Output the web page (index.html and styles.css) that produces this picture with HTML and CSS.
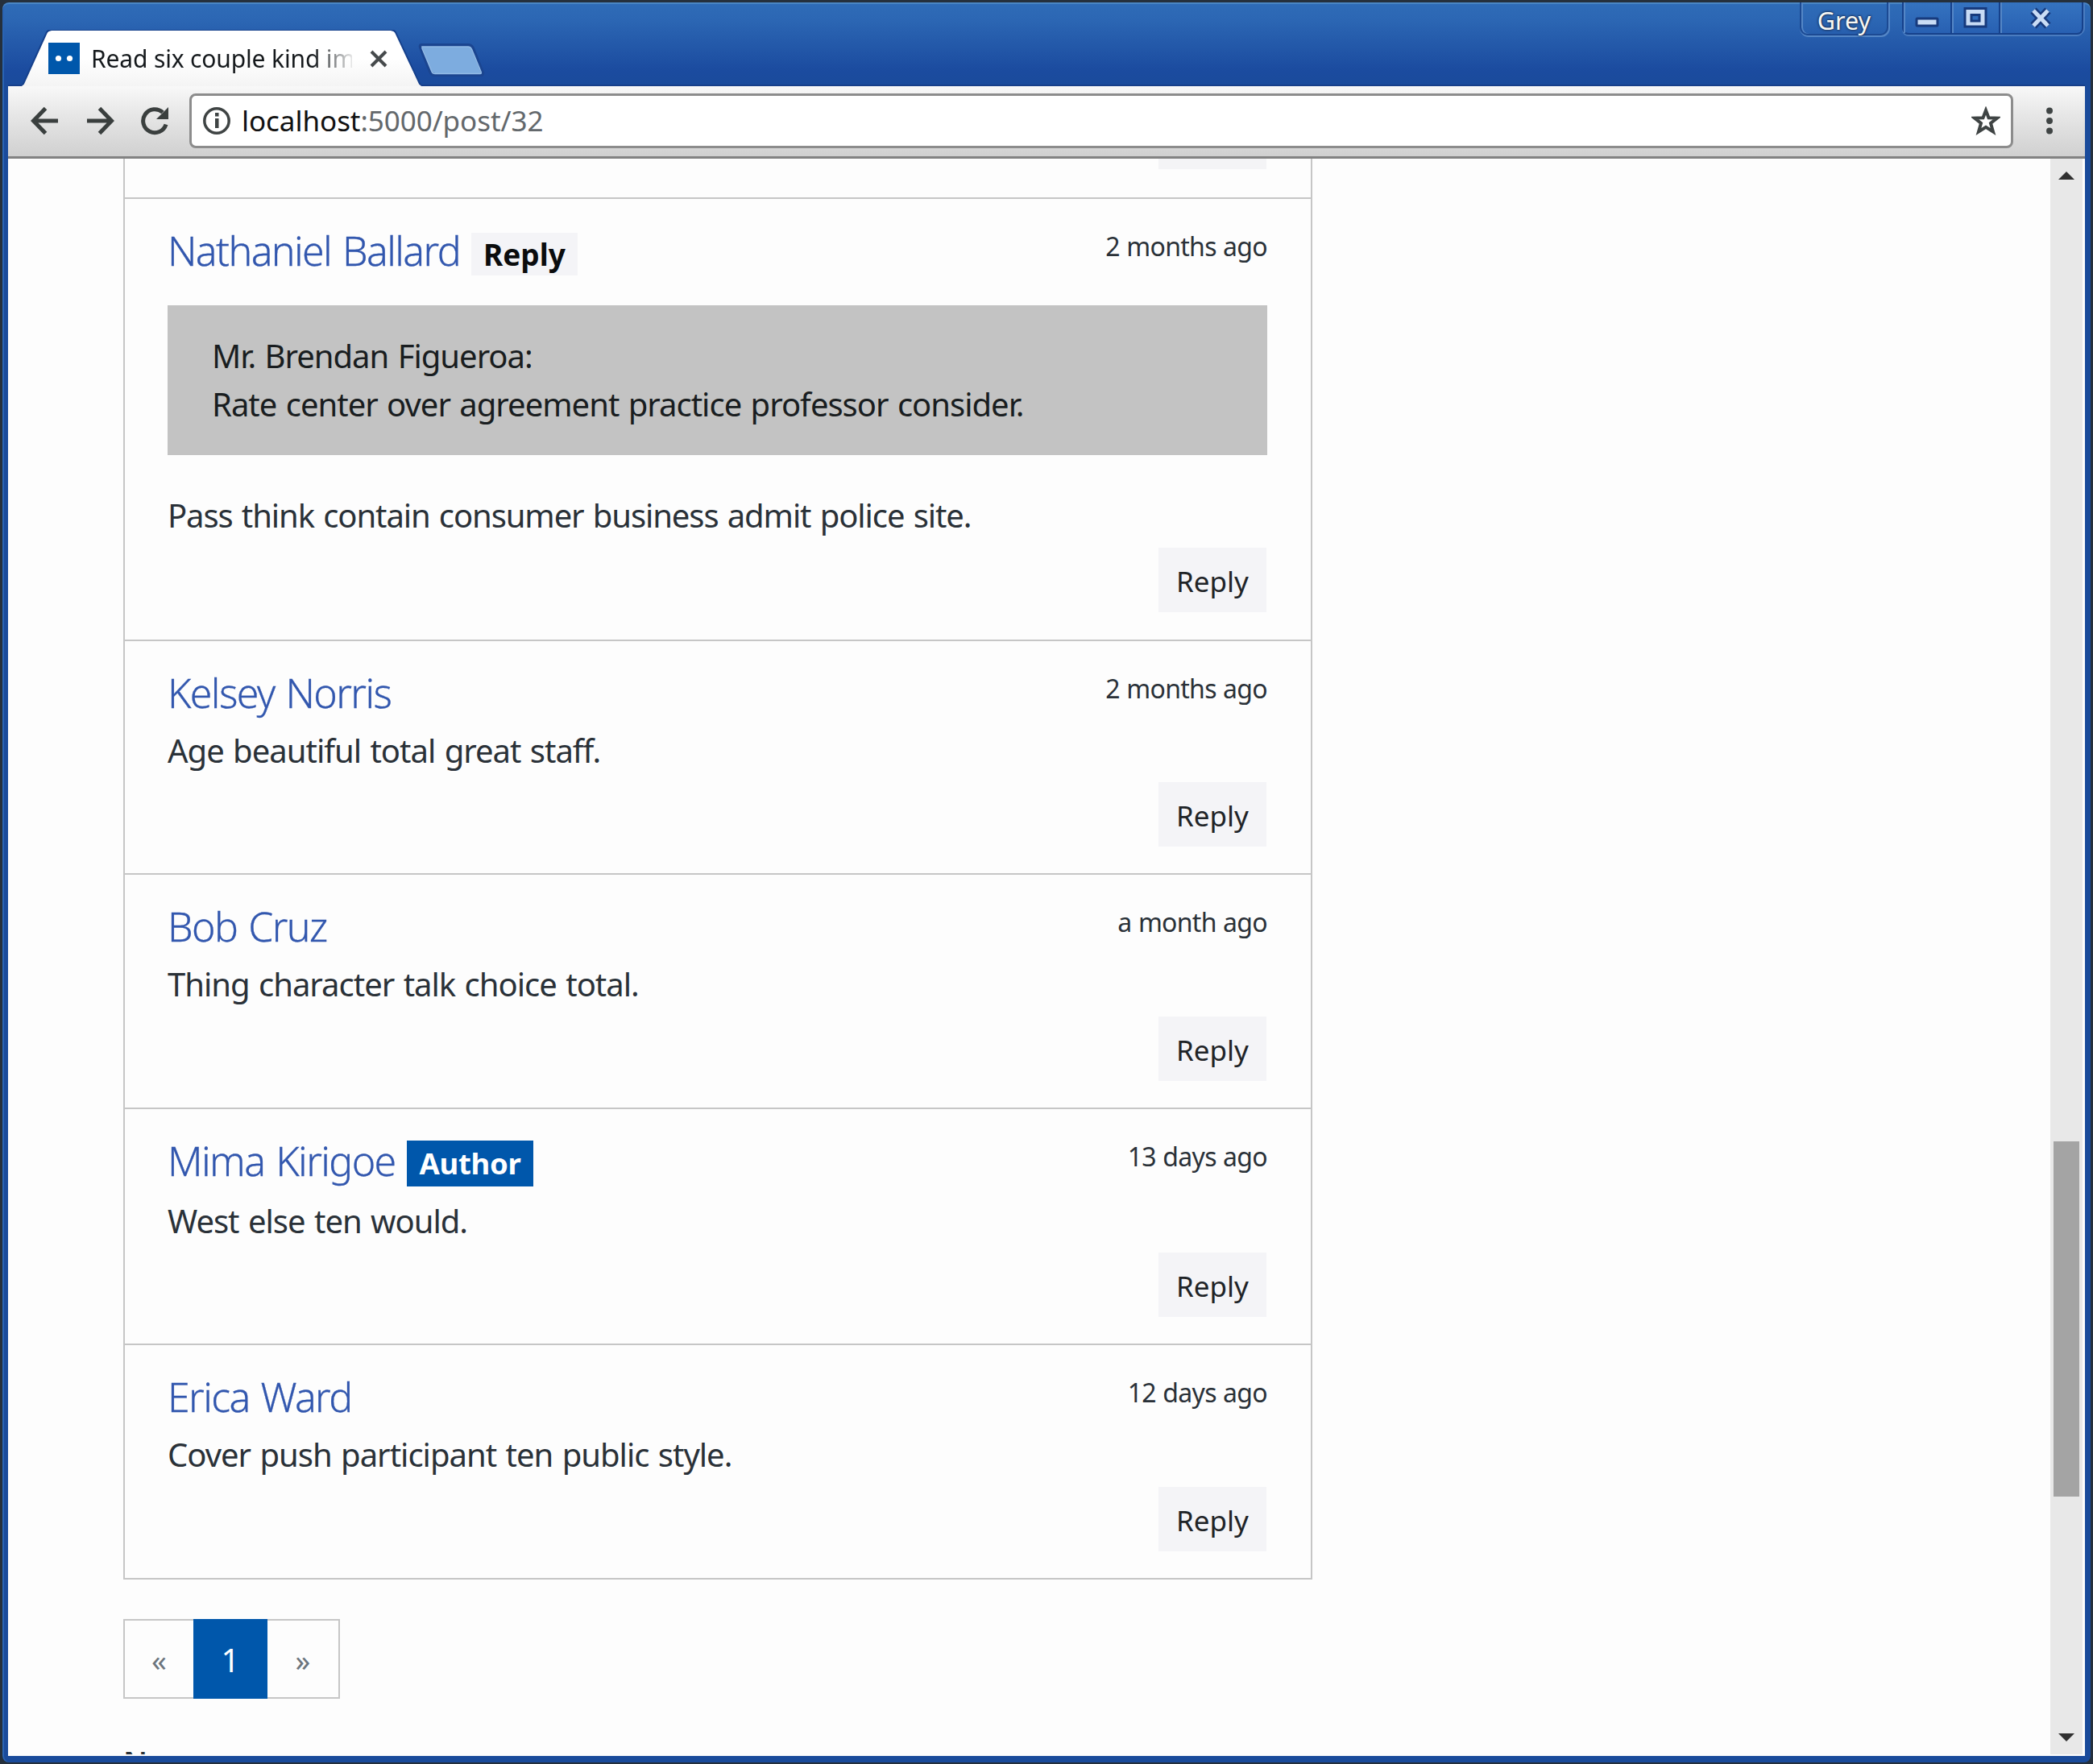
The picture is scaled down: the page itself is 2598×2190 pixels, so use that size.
FILE: index.html
```html
<!DOCTYPE html>
<html lang="en">
<head>
<meta charset="utf-8">
<title>Read six couple kind</title>
<link rel="stylesheet" href="styles.css">
</head>
<body>
<div class="window">
  <header class="titlebar">
    <div class="tab">
      <svg class="tab-shape" width="496" height="70" viewBox="0 0 496 70">
        <defs><linearGradient id="tabfill" x1="0" y1="0" x2="0" y2="1"><stop offset="0.5" stop-color="#fff"/><stop offset="1" stop-color="#f4f4f4"/></linearGradient></defs>
        <path d="M0 70 L2 68 L31 4 Q33 1 37 1 H458 Q462 1 464 4 L494 68 L496 70 Z" fill="url(#tabfill)"/>
        <path d="M0 68 L2 67 L31 3 Q33 0 37 0 H458 Q462 0 464 3 L494 67 L496 68" fill="none" stroke="#16418c" stroke-width="2"/>
      </svg>
      <div class="tab-content">
        <svg class="favicon" width="39" height="39" viewBox="0 0 39 39"><rect width="39" height="39" fill="#0057ab"/><circle cx="12.500" cy="19.500" r="3.600" fill="#fff"/><circle cx="26.500" cy="19.500" r="3.600" fill="#fff"/></svg>
        <span class="tab-title">Read six couple kind im</span>
        <svg class="tab-close" width="22" height="22" viewBox="0 0 22 22"><path d="M2 2 L20 20 M20 2 L2 20" stroke="#464a4c" stroke-width="4" fill="none"/></svg>
      </div>
    </div>
    <svg class="new-tab" width="84" height="44" viewBox="0 0 84 44"><path d="M5 3 H63 Q67 3 69 7 L81 37 Q82 40 79 40 H22 Q18 40 16 36 L4 6 Q3 3 5 3 Z" fill="#7dacdf" stroke="#1b4590" stroke-width="4"/><path d="M6 5 H63 Q66 5 67.500 8 L79 36 Q80 38.500 78 38.500 H22 Q19 38.500 18 36 L6 7 Z" fill="none" stroke="#93bbe6" stroke-width="1.500"/></svg>
    <div class="user-button">Grey</div>
    <div class="window-buttons">
      <div class="win-btn"><svg width="32" height="30" viewBox="0 0 32 30"><rect x="3" y="16" width="26" height="9" rx="1" fill="#c9dcf5" stroke="#173a7d" stroke-width="3"/></svg></div>
      <div class="win-btn"><svg width="32" height="30" viewBox="0 0 32 30"><path fill-rule="evenodd" d="M3 3.500 H29 V26 H3 Z M11 11.500 V19 H21 V11.500 Z" fill="#c9dcf5" stroke="#173a7d" stroke-width="3"/></svg></div>
      <div class="win-btn win-close"><svg width="32" height="30" viewBox="0 0 32 30"><path d="M6 6 L24 25 M24 6 L6 25" stroke="#173a7d" stroke-width="10"/><path d="M6 6 L24 25 M24 6 L6 25" stroke="#c9dcf5" stroke-width="5"/></svg></div>
    </div>
  </header>
  <nav class="toolbar">
    <svg class="tool" width="36" height="36" viewBox="0 0 36 36"><path d="M34 18 H4 M18.500 2.500 L3.500 18 L18.500 33.500" fill="none" stroke="#3a3f3e" stroke-width="5"/></svg>
    <svg class="tool" width="36" height="36" viewBox="0 0 36 36"><path d="M2 18 H32 M17.500 2.500 L32.500 18 L17.500 33.500" fill="none" stroke="#3a3f3e" stroke-width="5"/></svg>
    <svg class="tool" width="36" height="36" viewBox="0 0 36 36"><path d="M32 22.500 A14.500 14.500 0 1 1 28 7.500" fill="none" stroke="#3a3f3e" stroke-width="5"/><path d="M35 1 V16 H20 Z" fill="#3a3f3e"/></svg>
    <div class="omnibox">
      <svg width="36" height="36" viewBox="0 0 36 36"><circle cx="18" cy="18" r="15.200" fill="none" stroke="#3f4444" stroke-width="3.500"/><rect x="16" y="15" width="4.500" height="12" fill="#3f4444"/><rect x="16" y="8" width="4.500" height="4.500" fill="#3f4444"/></svg>
      <span class="url"><span class="host">localhost</span>:5000/post/32</span>
      <svg class="star" width="36" height="36" viewBox="0 0 36 36"><path d="M18 5 L21.500 14.300 L32 14.600 L24 21 L27 31.500 L18 25.800 L9 31.500 L12 21 L4 14.600 L14.500 14.300 Z" fill="none" stroke="#3f4444" stroke-width="4"/></svg>
    </div>
    <svg class="menu" width="10" height="36" viewBox="0 0 10 36"><circle cx="5" cy="5.500" r="4" fill="#3f4444"/><circle cx="5" cy="18" r="4" fill="#3f4444"/><circle cx="5" cy="30.500" r="4" fill="#3f4444"/></svg>
  </nav>
  <div class="viewport">
    <main class="page">
      <section class="comments">
        <article class="comment comment-cut"><div class="reply-cut"></div></article>
        <article class="comment comment-quoted">
          <div class="head"><a class="name">Nathaniel Ballard</a><span class="badge badge-reply">Reply</span><time class="time">2 months ago</time></div>
          <blockquote class="quote">Mr. Brendan Figueroa:<br>Rate center over agreement practice professor consider.</blockquote>
          <p class="text">Pass think contain consumer business admit police site.</p>
          <a class="reply">Reply</a>
        </article>
        <article class="comment">
          <div class="head"><a class="name">Kelsey Norris</a><time class="time">2 months ago</time></div>
          <p class="text">Age beautiful total great staff.</p>
          <a class="reply">Reply</a>
        </article>
        <article class="comment">
          <div class="head"><a class="name">Bob Cruz</a><time class="time">a month ago</time></div>
          <p class="text">Thing character talk choice total.</p>
          <a class="reply">Reply</a>
        </article>
        <article class="comment">
          <div class="head"><a class="name">Mima Kirigoe</a><span class="badge badge-author">Author</span><time class="time">13 days ago</time></div>
          <p class="text">West else ten would.</p>
          <a class="reply">Reply</a>
        </article>
        <article class="comment">
          <div class="head"><a class="name">Erica Ward</a><time class="time">12 days ago</time></div>
          <p class="text">Cover push participant ten public style.</p>
          <a class="reply">Reply</a>
        </article>
      </section>
      <nav class="pagination"><span class="page-item prev">«</span><span class="page-item active">1</span><span class="page-item">»</span></nav>
      <p class="footer-line">N</p>
    </main>
    <div class="scrollbar">
      <svg width="20" height="10" viewBox="0 0 20 10"><path d="M0 10 L10 0 L20 10 Z" fill="#303030"/></svg>
      <div class="thumb"></div>
      <svg width="20" height="10" viewBox="0 0 20 10"><path d="M0 0 H20 L10 10 Z" fill="#303030"/></svg>
    </div>
  </div>
</div>
</body>
</html>
```
FILE: styles.css
```css
* { box-sizing: border-box; }

body {
  margin: 0;
  background: #25303c;
  font-family: "Noto Sans", "Open Sans", sans-serif;
  color: #2a3138;
}

p, blockquote { margin: 0; }
svg { display: block; flex: none; }

.window {
  width: 2592px;
  height: 2185px;
  margin: 3px;
  padding: 0 7px 5px 7px;
  border-radius: 8px;
  background: #1a4b9b;
  box-shadow: inset 0 2px 0 #4a86c4, inset 2px 0 0 #2a64b4;
  background-image: linear-gradient(#2f6cb7 0, #2c67b4 20px, #1b4b9f 85px, #1a4b9b 100%);
  background-repeat: no-repeat;
  background-size: 100% 104px;
  overflow: hidden;
}

/* title bar */
.titlebar {
  display: flex;
  align-items: flex-start;
  height: 104px;
  border-bottom: 2px solid #173f8a;
}

.tab {
  display: grid;
  width: 496px;
  margin: 34px 0 0 17px;
}

.tab-shape, .tab-content { grid-area: 1 / 1; }

.tab-content {
  display: flex;
  align-items: flex-start;
  padding: 16px 0 0 33px;
}

.tab-title {
  width: 324px;
  margin-left: 14px;
  overflow: hidden;
  white-space: nowrap;
  font-size: 30px;
  line-height: 39px;
  letter-spacing: -0.15px;
  background: linear-gradient(to right, #15191c 275px, #ffffff 330px);
  background-clip: text;
  -webkit-background-clip: text;
  color: transparent;
}

.tab-close { margin: 9px 0 0 22px; }
.new-tab { margin: 50px 0 0 -5px; }

.user-button {
  width: 110px;
  height: 41px;
  margin-left: auto;
  border: 2px solid #1c4a93;
  border-top: 0;
  border-radius: 0 0 10px 10px;
  box-shadow: 1px 1px 0 1px #5486c6, inset 2px 0 0 #5486c6;
  color: #f8f8f4;
  font-size: 30.5px;
  line-height: 44px;
  text-align: center;
  text-shadow: 0 0 3px #1d2d4d, 0 0 3px #1d2d4d;
}

.window-buttons {
  display: flex;
  height: 40px;
  margin: 0 2px 0 17px;
  border: 2px solid #16418b;
  border-top: 0;
  border-radius: 0 0 8px 8px;
  box-shadow: 0 2px 0 #4a7cc0, 2px 0 0 #4a7cc0;
  background: linear-gradient(#3573c0, #2860b2);
}

.win-btn {
  display: flex;
  justify-content: center;
  width: 60px;
  padding-top: 4px;
  border-right: 2px solid #16418b;
  box-shadow: inset 2px 0 0 #5486c6;
}

.win-close { width: 101px; border-right: 0; }

/* toolbar */
.toolbar {
  display: flex;
  align-items: center;
  height: 90px;
  padding: 0 39px 2px 28px;
  border-bottom: 3px solid #828282;
  background: linear-gradient(#f8f8f8, #e9e9e9 35%, #d0d0d0);
}

.tool { margin-right: 32px; }

.omnibox {
  display: flex;
  align-items: center;
  flex: 1;
  height: 68px;
  margin-left: -7px;
  margin-right: 40px;
  padding: 0 13px;
  border: 3px solid #8c8c8c;
  border-radius: 8px;
  background: #fff;
}

.url {
  margin-left: 13px;
  color: #63686c;
  font-size: 35px;
  letter-spacing: -0.05px;
  line-height: 56px;
}

.host { color: #111; }
.star { margin-left: auto; }

/* page */
.viewport {
  display: flex;
  height: 1983px;
  background: #fdfdfd;
}

.page {
  flex: 1;
  height: 1981px;
  padding-left: 143px;
  overflow: hidden;
}

.comments {
  width: 1476px;
  border: 2px solid #c6c6c6;
  border-top: 0;
}

.comment {
  display: flex;
  flex-direction: column;
  padding: 33px 54px 33px 53px;
  border-top: 2px solid #c6c6c6;
}

.comment-quoted { padding-bottom: 34px; }

.comment-cut {
  height: 48px;
  padding-top: 0;
  border-top: 0;
}

.reply-cut {
  flex: none;
  align-self: flex-end;
  width: 134px;
  height: 13px;
  margin-right: 1px;
  background: #f4f4f6;
}

.head { display: flex; align-items: flex-start; }

.name {
  color: #3257ae;
  font-size: 50px;
  font-weight: 300;
  line-height: 62px;
  letter-spacing: -1.6px;
  word-spacing: 2.5px;
  -webkit-text-stroke: 0.3px #3257ae;
}

.badge {
  margin-left: 14px;
  font-weight: 700;
}

.badge-reply {
  margin-top: 9px;
  padding: 0 15px;
  background: #f4f4f7;
  color: #0b0c0d;
  font-size: 37px;
  line-height: 53px;
}

.badge-author {
  margin-top: 6px;
  margin-bottom: 2px;
  padding: 0 16px;
  background: #0057ab;
  color: #fff;
  font-size: 36.5px;
  letter-spacing: -0.3px;
  line-height: 57px;
}

.time {
  margin-left: auto;
  font-size: 32px;
  letter-spacing: -0.7px;
  word-spacing: 0.7px;
  line-height: 51px;
}

.text, .quote {
  font-size: 40px;
  letter-spacing: -1px;
  word-spacing: 2px;
  line-height: 60.5px;
}

.text { margin-top: 11px; }

.quote {
  margin-top: 37px;
  padding: 32.5px 55px;
  background: #c3c3c3;
  color: #191d20;
}

.quote + .text {
  margin-top: 45px;
  letter-spacing: -1.1px;
}

.reply {
  align-self: flex-end;
  width: 134px;
  height: 80px;
  margin: 9px 1px 0 0;
  background: #f4f4f7;
  color: #1f2428;
  font-size: 35px;
  line-height: 84px;
  text-align: center;
}

.pagination {
  display: flex;
  width: 269px;
  height: 99px;
  margin-top: 49px;
  border: 2px solid #c6c6c6;
}

.page-item {
  flex: 1;
  color: #6c757d;
  font-size: 37px;
  line-height: 97px;
  text-align: center;
}

.page-item.prev {
  flex: none;
  width: 85px;
}

.page-item.active {
  flex: none;
  width: 92px;
  margin: -2px 0;
  background: #0057ab;
  color: #fff;
  font-size: 40px;
  line-height: 101px;
}

.footer-line {
  margin-top: 48px;
  font-size: 38px;
  font-weight: 600;
  line-height: 60px;
}

.scrollbar {
  display: flex;
  flex-direction: column;
  align-items: center;
  justify-content: space-between;
  width: 40px;
  height: 1981px;
  margin-right: 3px;
  padding: 16px 0;
  background: #e8e8e8;
}

.thumb {
  width: 32px;
  height: 441px;
  margin-top: 900px;
  background: #a4a4a4;
}
```
